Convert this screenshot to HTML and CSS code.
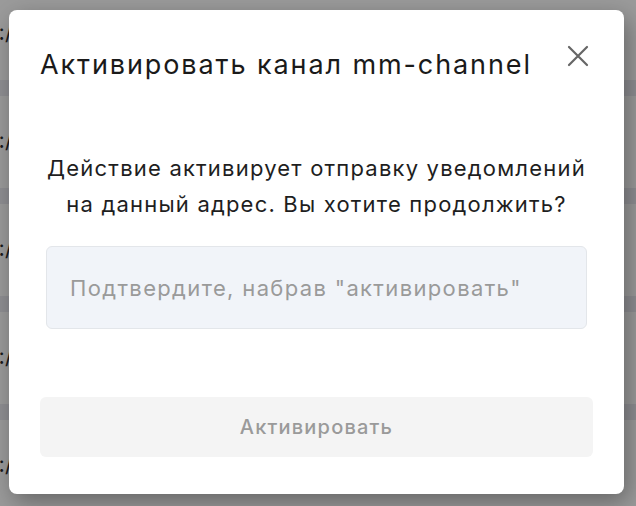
FILE: index.html
```html
<!DOCTYPE html>
<html lang="ru">
  <head>
    <meta charset="UTF-8" />
    <meta name="viewport" content="width=device-width, initial-scale=1.0" />
    <title>Активировать канал</title>
    <link rel="stylesheet" href="styles.css">
  </head>
  <body>
    <div class="backdrop">
      <div class="row"><span class="row-text">s:/</span></div>
      <div class="row"><span class="row-text">s:/</span></div>
      <div class="row"><span class="row-text">s:/</span></div>
      <div class="row"><span class="row-text">s:/</span></div>
      <div class="row"><span class="row-text">s:/</span></div>
    </div>

    <div class="overlay">
      <div class="modal">
        <div class="modal-header">
          <h2>Активировать канал mm-channel</h2>
          <button class="close-btn" aria-label="Закрыть">
            <svg width="22" height="22" viewBox="0 0 22 22">
              <path d="M2 2 L20 20 M20 2 L2 20" stroke="#666" stroke-width="2.2" stroke-linecap="round" fill="none" />
            </svg>
          </button>
        </div>

        <p class="modal-text">Действие активирует отправку уведомлений<br>на данный адрес. Вы хотите продолжить?</p>

        <input class="confirm-input" type="text" placeholder='Подтвердите, набрав "активировать"' />

        <button class="submit-btn" disabled>Активировать</button>
      </div>
    </div>
  </body>
</html>
```

FILE: styles.css
```css
body {
  margin: 0;
  padding: 0;
  height: 506px;
  font-family: Inter, "Noto Sans", sans-serif;
  background-color: #9b9b9b;
  overflow: hidden;
}

.backdrop {
  height: 518px;
  margin-top: -12px;
  overflow: hidden;
}

.row {
  height: 108px;
  box-sizing: border-box;
  border-bottom: 16px solid #8f8f93;
  display: flex;
  align-items: flex-start;
  padding-top: 31px;
}

.row-text {
  margin-left: -13px;
  font-size: 22px;
  color: #1a1a1a;
}

.overlay {
  position: absolute;
  top: 0;
  left: 0;
  width: 636px;
  height: 506px;
  display: flex;
  align-items: flex-start;
  justify-content: flex-start;
}

.modal {
  margin: 10px 0 0 9px;
  width: 615px;
  height: 484px;
  box-sizing: border-box;
  background: #fff;
  border-radius: 8px;
  box-shadow: 4px 8px 24px rgba(0, 0, 0, 0.35);
  padding: 0 31px;
  display: flex;
  flex-direction: column;
}

.modal-header {
  display: flex;
  justify-content: space-between;
  align-items: flex-start;
  height: 112px;
}

.modal-header h2 {
  margin: 38px 0 0 0;
  font-size: 27px;
  font-weight: 400;
  letter-spacing: 1.9px;
  color: #1a1a1a;
  line-height: 34px;
  white-space: nowrap;
}

.close-btn {
  margin: 35px 4px 0 0;
  padding: 0;
  border: none;
  background: none;
  cursor: pointer;
  width: 22px;
  height: 22px;
}

.modal-text {
  margin: 28px 0 0 0;
  font-size: 22px;
  line-height: 36px;
  letter-spacing: 1.2px;
  color: #1e1e1e;
  text-align: center;
  white-space: nowrap;
}

.confirm-input {
  margin: 24px 6px 0 6px;
  height: 83px;
  box-sizing: border-box;
  padding: 0 23px;
  font-family: Inter, "Noto Sans", sans-serif;
  font-size: 22px;
  letter-spacing: 1.35px;
  background-color: #f1f4f9;
  border: 1px solid #e3e6ea;
  border-radius: 6px;
  outline: none;
}

.confirm-input::placeholder {
  color: #9a9a9a;
}

.submit-btn {
  margin-top: 68px;
  height: 60px;
  border: none;
  border-radius: 6px;
  background-color: #f4f4f4;
  color: #9a9a9a;
  font-family: Inter, "Noto Sans", sans-serif;
  font-size: 20px;
  font-weight: 500;
  letter-spacing: 1.2px;
}
```
